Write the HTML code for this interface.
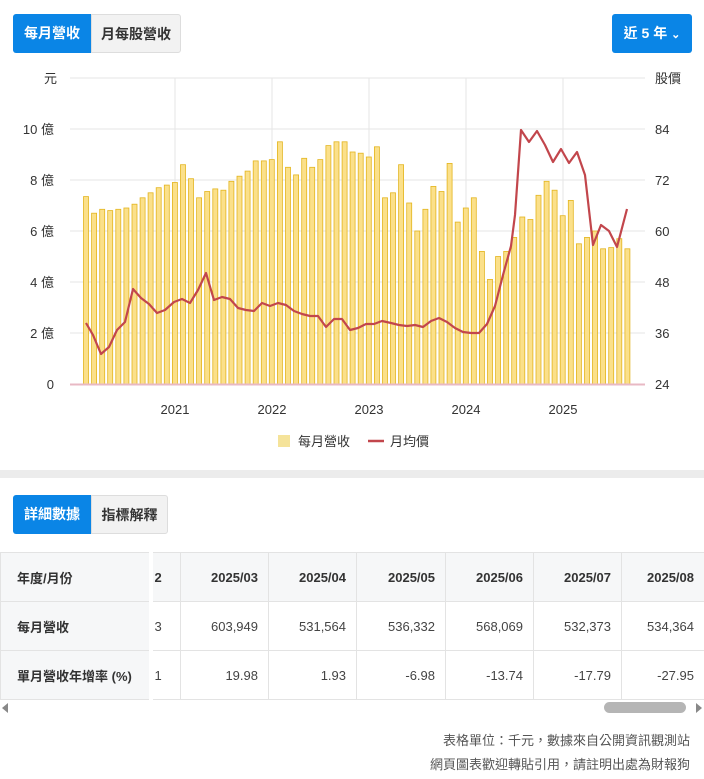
<!DOCTYPE html>
<html><head><meta charset="utf-8">
<style>
*{box-sizing:border-box;margin:0;padding:0}
body{width:704px;height:779px;background:#fff;font-family:"Liberation Sans","Noto Sans CJK TC",sans-serif;color:#333;position:relative;overflow:hidden}
.btn{position:absolute;height:39px;line-height:39px;font-size:14px;font-weight:bold;text-align:center}
.blue{background:#0a85e6;color:#fff}
.gray{background:#f2f2f2;color:#333;border:1px solid #ddd}
svg text{font-family:"Liberation Sans","Noto Sans CJK TC",sans-serif}
table{position:absolute;left:0;top:552px;border-collapse:collapse;font-size:13px;table-layout:fixed;width:720px}
td{height:49px;border:1px solid #e3e3e3;text-align:right;padding-right:10px;color:#444;white-space:nowrap;overflow:hidden}
td.h{text-align:left;padding-left:16px;font-weight:bold;background:#f6f7f8;color:#333}
tr.hd td{background:#f6f7f8;font-weight:bold;color:#333}
.foot{position:absolute;right:14px;font-size:13px;color:#555}
</style></head><body>
<div class="btn blue" style="left:13px;top:14px;width:78px;border-radius:3px 0 0 3px">每月營收</div>
<div class="btn gray" style="left:91px;top:14px;width:90px;border-radius:0 3px 3px 0">月每股營收</div>
<div class="btn blue" style="left:612px;top:14px;width:80px;border-radius:3px">近 5 年 <span style="font-size:11px">&#8964;</span></div>

<svg id="ch" width="704" height="460" style="position:absolute;left:0;top:0">
</svg>
<div style="position:absolute;left:0;top:470px;width:704px;height:8px;background:#ececec"></div>

<div class="btn blue" style="left:13px;top:495px;width:78px;border-radius:3px 0 0 3px">詳細數據</div>
<div class="btn gray" style="left:91px;top:495px;width:77px;border-radius:0 3px 3px 0">指標解釋</div>

<table>
<colgroup><col style="width:150px"><col style="width:30px"><col style="width:88px"><col style="width:88px"><col style="width:89px"><col style="width:88px"><col style="width:88px"><col style="width:99px"></colgroup>
<tr class="hd"><td class="h">年度/月份</td><td style="text-align:left;padding-left:2px;border-left:4px solid #fff">2</td><td>2025/03</td><td>2025/04</td><td>2025/05</td><td>2025/06</td><td>2025/07</td><td style="padding-right:26px">2025/08</td></tr>
<tr><td class="h">每月營收</td><td style="text-align:left;padding-left:2px;border-left:4px solid #fff">3</td><td>603,949</td><td>531,564</td><td>536,332</td><td>568,069</td><td>532,373</td><td style="padding-right:26px">534,364</td></tr>
<tr><td class="h">單月營收年增率 (%)</td><td style="text-align:left;padding-left:2px;border-left:4px solid #fff">1</td><td>19.98</td><td>1.93</td><td>-6.98</td><td>-13.74</td><td>-17.79</td><td style="padding-right:26px">-27.95</td></tr>
</table>
<div style="position:absolute;left:2px;top:703px;width:0;height:0;border-top:5px solid transparent;border-bottom:5px solid transparent;border-right:6px solid #888"></div>
<div style="position:absolute;left:604px;top:702px;width:82px;height:11px;border-radius:6px;background:#b5b5b5"></div>
<div style="position:absolute;left:696px;top:703px;width:0;height:0;border-top:5px solid transparent;border-bottom:5px solid transparent;border-left:6px solid #888"></div>
<div class="foot" style="top:730px">表格單位：千元，數據來自公開資訊觀測站</div>
<div class="foot" style="top:754px">網頁圖表歡迎轉貼引用，請註明出處為財報狗</div>

<script>
var s=document.getElementById('ch'),h='';
function t(x,y,str,a){h+='<text x="'+x+'" y="'+y+'" font-size="13" fill="#333" text-anchor="'+a+'">'+str+'</text>';}
var L=['0','2 億','4 億','6 億','8 億','10 億'],R=[24,36,48,60,72,84];
for(var i=0;i<6;i++){var y=384-i*51;if(i>0)h+='<line x1="70" x2="645" y1="'+y+'" y2="'+y+'" stroke="#e6e6e6"/>';t(54,y+5,L[i],'end');t(655,y+5,R[i],'start');}
h+='<line x1="70" x2="645" y1="78" y2="78" stroke="#e6e6e6"/>';t(57,83,'元','end');t(655,83,'股價','start');
var yr=['2021','2022','2023','2024','2025'];
for(var i=0;i<5;i++){var x=175+i*97;h+='<line x1="'+x+'" x2="'+x+'" y1="78" y2="384" stroke="#e6e6e6"/>';t(x,414,yr[i],'middle');}
var b=[7.35,6.7,6.85,6.8,6.85,6.9,7.05,7.3,7.5,7.7,7.8,7.9,8.6,8.05,7.3,7.55,7.65,7.6,7.95,8.15,8.35,8.75,8.75,8.8,9.5,8.5,8.2,8.85,8.5,8.8,9.35,9.5,9.5,9.1,9.05,8.9,9.3,7.3,7.5,8.6,7.1,6.0,6.85,7.75,7.55,8.65,6.35,6.9,7.3,5.2,4.1,5.0,5.2,5.75,6.55,6.45,7.4,7.95,7.6,6.6,7.2,5.5,5.75,6.0,5.3,5.35,5.7,5.3];
for(var i=0;i<b.length;i++){var x=86+i*8.08,hh=b[i]*25.5;h+='<rect x="'+(x-2.5).toFixed(1)+'" y="'+(384-hh).toFixed(1)+'" width="5" height="'+hh.toFixed(1)+'" fill="#fbe08a" stroke="#e3b51f" stroke-width="0.8"/>';}
h+='<line x1="70" x2="645" y1="384.5" y2="384.5" stroke="#e8b9c4" stroke-width="2"/>';
var p="86,323 93,335 101,354 109,347 117,330 125,322 133,289 141,298 149,304 157,313 165,310 174,302 182,299 190,303 198,290 206,273 214,300 222,297 230,299 238,308 246,310 254,311 262,303 270,306 278,303 286,305 294,311 302,314 310,316 318,316 326,327 334,319 342,319 350,330 358,328 366,324 374,324 382,321 391,323 399,325 407,326 415,325 423,327 431,321 439,318 447,322 455,328 463,332 471,333 479,333 487,324 495,306 503,275 511,246 515,215 521,130 529,142 537,131 545,145 553,162 561,149 569,163 577,152 585,175 593,245 601,225 609,231 617,247 627,209";
h+='<polyline points="'+p+'" fill="none" stroke="#c2464c" stroke-width="2.2" stroke-linejoin="round"/>';
h+='<rect x="278" y="435" width="12" height="12" fill="#f5e39a"/>';t(298,446,'每月營收','start');
h+='<line x1="368" x2="384" y1="441" y2="441" stroke="#c2464c" stroke-width="2.5"/>';t(390,446,'月均價','start');
s.innerHTML=h;
</script>
</body></html>
